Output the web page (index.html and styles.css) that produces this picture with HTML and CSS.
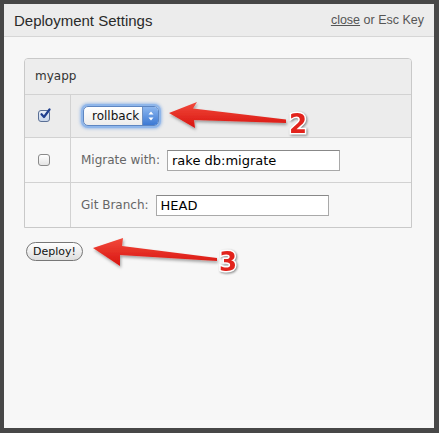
FILE: index.html
```html
<!DOCTYPE html>
<html>
<head>
<meta charset="utf-8">
<link rel="stylesheet" href="styles.css">
</head>
<body>
<div class="dialog">
  <div class="dialog-head">
    <span class="title">Deployment Settings</span>
    <span class="close"><a href="#">close</a> or Esc Key</span>
  </div>
  <div class="dialog-body">
    <div class="panel">
      <div class="panel-head">myapp</div>
      <div class="row row-sel">
        <div class="cell-check">
          <span class="cb cb-on"><svg width="12" height="12" viewBox="0 0 12 12"><path d="M2.5 6.2 L5 9 L10.5 1.5" fill="none" stroke="#1f3f8f" stroke-width="2.2" stroke-linecap="round" stroke-linejoin="round"/></svg></span>
        </div>
        <div class="cell-main">
          <div class="select"><span class="select-text">rollback</span><span class="stepper"><svg width="8" height="12" viewBox="0 0 8 12"><path d="M4 1.5 L6.5 4.5 H1.5Z M4 10.5 L6.5 7.5 H1.5Z" fill="#fff"/></svg></span></div>
        </div>
      </div>
      <div class="row row-mid">
        <div class="cell-check"><span class="cb"></span></div>
        <div class="cell-main">
          <label class="lbl">Migrate with:</label>
          <input class="txt" type="text" value="rake db:migrate">
        </div>
      </div>
      <div class="row row-last">
        <div class="cell-check"></div>
        <div class="cell-main">
          <label class="lbl">Git Branch:</label>
          <input class="txt" type="text" value="HEAD">
        </div>
      </div>
    </div>
    <button class="deploy">Deploy!</button>
  </div>
</div>
<svg class="overlay" width="439" height="433" viewBox="0 0 439 433">
  <defs>
    <linearGradient id="rg" x1="0" y1="0" x2="0" y2="1">
      <stop offset="0" stop-color="#f24a3c"/>
      <stop offset="1" stop-color="#d8140f"/>
    </linearGradient>
    <filter id="sh" x="-20%" y="-50%" width="140%" height="200%">
      <feDropShadow dx="1" dy="2" stdDeviation="1.5" flood-color="#000" flood-opacity="0.35"/>
    </filter>
  </defs>
  <path filter="url(#sh)" fill="url(#rg)" d="M169 113 L197 102 L193 108.5 L286 119.5 L286 123 L194 120 L195 128 Z"/>
  <path filter="url(#sh)" fill="url(#rg)" d="M93 248 L123 238 L122 246 L217 258 L217 261 L120 255 L120 266 Z"/>
  <text class="num" x="289" y="133">2</text>
  <text class="num" x="219" y="271">3</text>
</svg>
</body>
</html>
```
FILE: styles.css
```css
html, body {
  margin: 0;
  padding: 0;
}
body {
  background: #474747;
  width: 439px;
  height: 433px;
  padding: 4px 0 0 4px;
  box-sizing: border-box;
  position: relative;
  font-family: "DejaVu Sans", sans-serif;
}
.dialog {
  width: 430px;
  height: 424px;
  background: #f7f7f7;
}
.dialog-head {
  height: 32px;
  background: #ececec;
  border-bottom: 1px solid #d6d6d6;
  display: flex;
  align-items: center;
  justify-content: space-between;
  padding: 0 10px 0 10px;
  font-family: "Liberation Sans", Arial, sans-serif;
}
.title {
  font-size: 15px;
  color: #2a2a2a;
}
.close {
  font-size: 12.5px;
  color: #555;
}
.close a {
  color: #555;
  text-decoration: underline;
}
.dialog-body {
  padding: 21px 0 0 20px;
}
.panel {
  width: 386px;
  border: 1px solid #c9c9c9;
  border-radius: 4px 4px 0 0;
  overflow: hidden;
}
.panel-head {
  height: 35px;
  line-height: 35px;
  padding-left: 10px;
  background: #ededed;
  border-bottom: 1px solid #d2d2d2;
  font-size: 12px;
  color: #333;
}
.row {
  display: grid;
  grid-template-columns: 46px 1fr;
}
.row-sel {
  height: 42px;
  background: #ececec;
  border-bottom: 1px solid #d2d2d2;
}
.row-mid {
  height: 44px;
  border-bottom: 1px solid #d2d2d2;
}
.row-last {
  height: 44px;
}
.cell-check {
  border-right: 1px solid #d2d2d2;
  display: flex;
  align-items: center;
  padding-left: 13px;
}
.cell-main {
  display: flex;
  align-items: center;
  padding-left: 10px;
  gap: 7px;
}
.cb {
  width: 10px;
  height: 10px;
  border: 1px solid #8a8a8a;
  border-radius: 3px;
  background: linear-gradient(#ffffff, #e4e4e4);
  position: relative;
  display: block;
}
.cb-on {
  border-color: #5a6f95;
  background: linear-gradient(#e8eef8, #c9d6ea);
}
.cb-on svg {
  position: absolute;
  left: 0px;
  top: -3px;
}
.select {
  margin-left: 2px;
  width: 74px;
  height: 18px;
  border: 1px solid #5d86c2;
  border-radius: 5px;
  box-shadow: 0 0 0 2px #8fb6ea, 0 0 3px 3px rgba(110, 160, 230, 0.6);
  background: linear-gradient(#ffffff, #ececec);
  display: flex;
  align-items: center;
  overflow: hidden;
  font-size: 12px;
  color: #111;
}
.select-text {
  flex: 1;
  padding-left: 8px;
}
.stepper {
  width: 15px;
  height: 100%;
  background: linear-gradient(#8cb6ee, #3c79d4);
  border-left: 1px solid #6e8fc0;
  display: flex;
  align-items: center;
  justify-content: center;
}
.lbl {
  font-size: 12px;
  color: #666;
}
.txt {
  height: 21px;
  box-sizing: border-box;
  width: 173px;
  border: 1px solid #a9a9a9;
  border-top-color: #888;
  background: #fff;
  font-family: "DejaVu Sans", sans-serif;
  font-size: 13px;
  color: #000;
  padding: 0 4px;
  margin: 0;
}
.deploy {
  margin: 14px 0 0 2px;
  height: 19px;
  width: 57px;
  border: 1px solid #777;
  border-radius: 10px;
  background: linear-gradient(#ffffff, #dedede);
  font-family: "DejaVu Sans", sans-serif;
  font-size: 11px;
  color: #111;
  padding: 0;
  display: block;
}
.overlay {
  position: absolute;
  left: 0;
  top: 0;
  pointer-events: none;
}
.num {
  font-family: "DejaVu Sans", sans-serif;
  font-weight: bold;
  font-size: 26px;
  fill: #e2231c;
  stroke: #ffffff;
  stroke-width: 3px;
  paint-order: stroke;
  filter: drop-shadow(1px 1px 1px rgba(0,0,0,0.45));
}
```
